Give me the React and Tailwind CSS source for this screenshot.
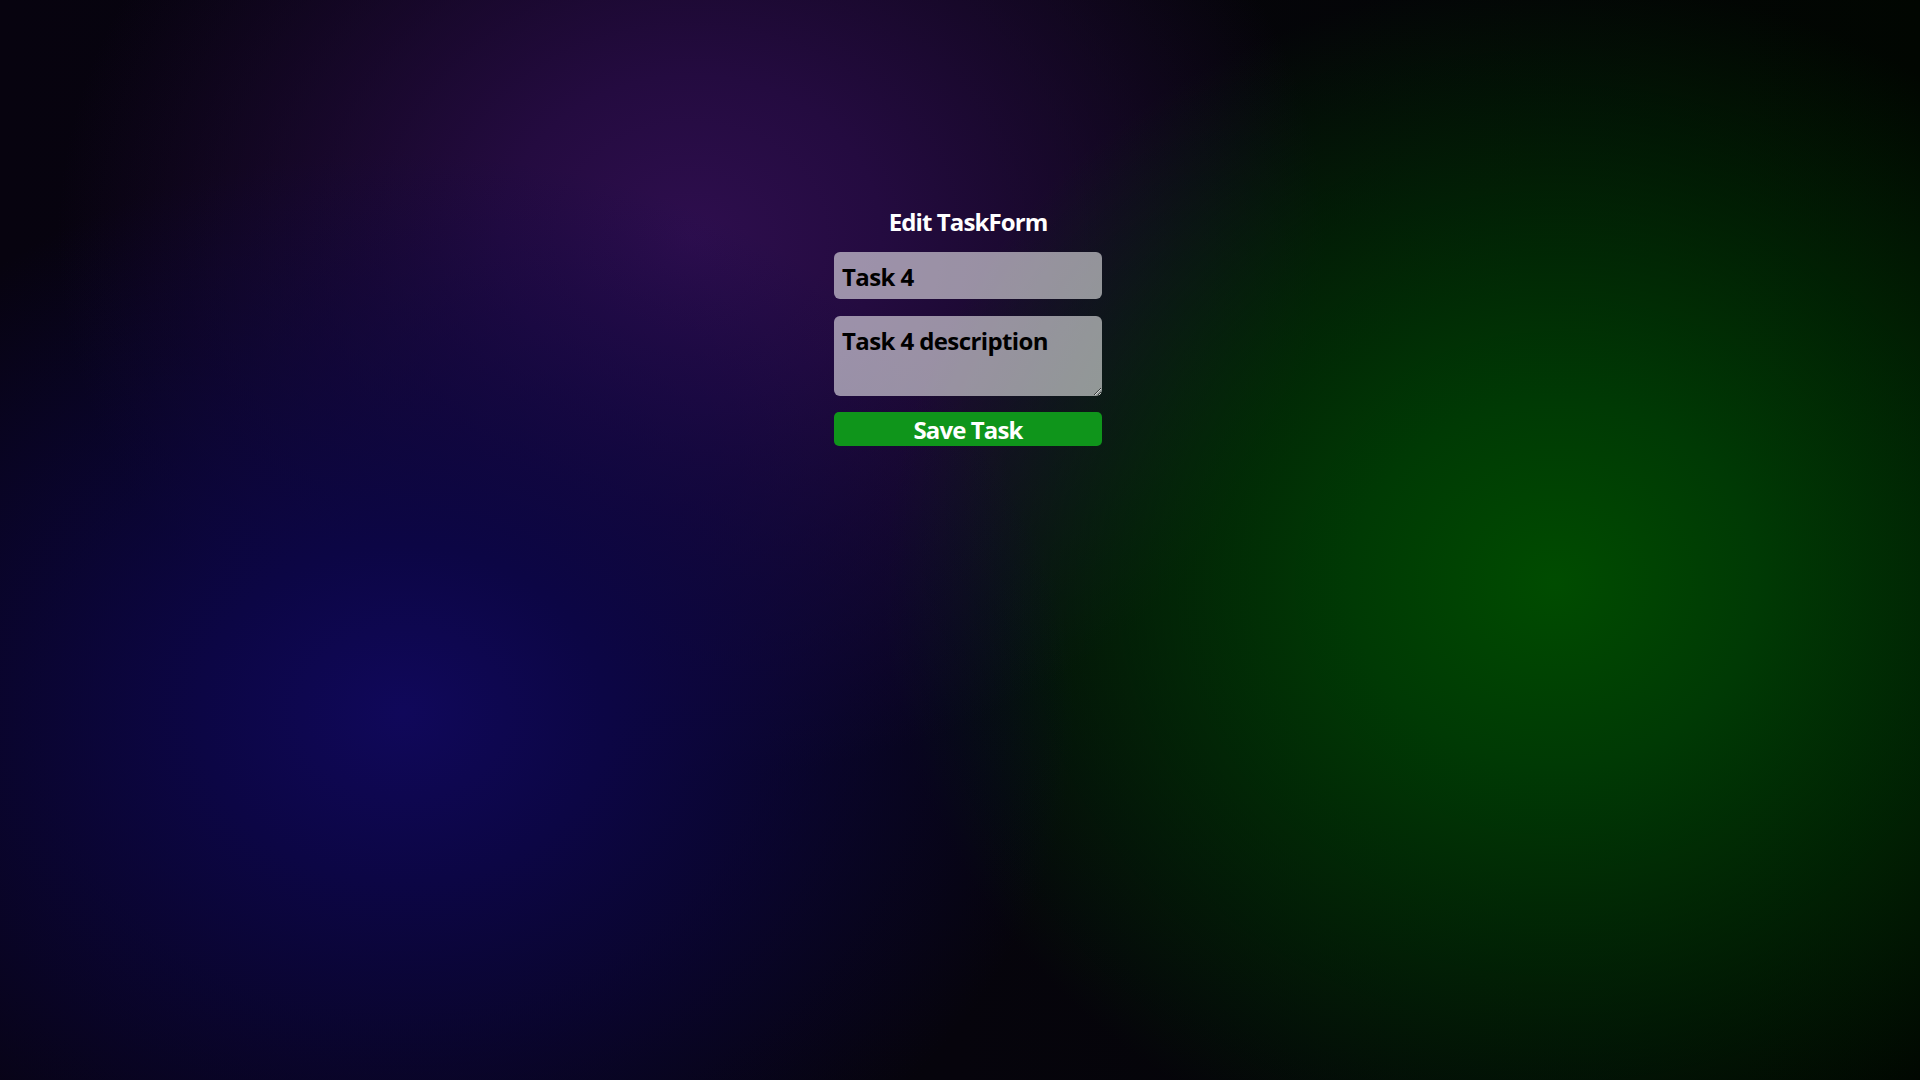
import React from "react";

const App = () => {
  return (
    <div className="min-h-screen w-full bg-[radial-gradient(ellipse_35%_52%_at_21%_66%,#10085a_0%,#0c0645_30%,transparent_100%),radial-gradient(ellipse_35%_56%_at_81%_54%,#004c00_0%,#003a04_30%,transparent_100%),radial-gradient(ellipse_33%_50%_at_36%_22%,#2e0e4e_0%,#240b40_30%,transparent_100%),linear-gradient(to_right,#07030f,#06040c_50%,#010601)] font-['Open_Sans',sans-serif]">
      <div className="flex justify-center pl-4 pt-[204px]">
        <form className="flex w-[268px] flex-col" onSubmit={(e) => e.preventDefault()}>
          {/* Title */}
          <h2 className="mb-[12px] text-center text-[24px] font-bold leading-[36px] tracking-[-0.9px] text-white">
            Edit TaskForm
          </h2>

          <input
            type="text"
            defaultValue="Task 4"
            className="h-[47px] w-full rounded-md bg-white/55 px-2 pt-[2px] text-[24px] font-bold tracking-[-0.6px] text-black outline-none"
          />

          <textarea
            defaultValue="Task 4 description"
            className="mt-[17px] h-[80px] w-full rounded-md bg-white/55 px-2 pt-[9px] text-[24px] font-bold leading-[32px] tracking-[-0.6px] text-black outline-none"
          />

          <button
            type="submit"
            className="mt-4 h-[34px] w-full rounded-[5px] bg-[#0f951b] pt-[2px] text-[24px] font-bold leading-[32px] tracking-[-0.9px] text-white"
          >
            Save Task
          </button>
        </form>
      </div>
    </div>
  );
};

export default App;
